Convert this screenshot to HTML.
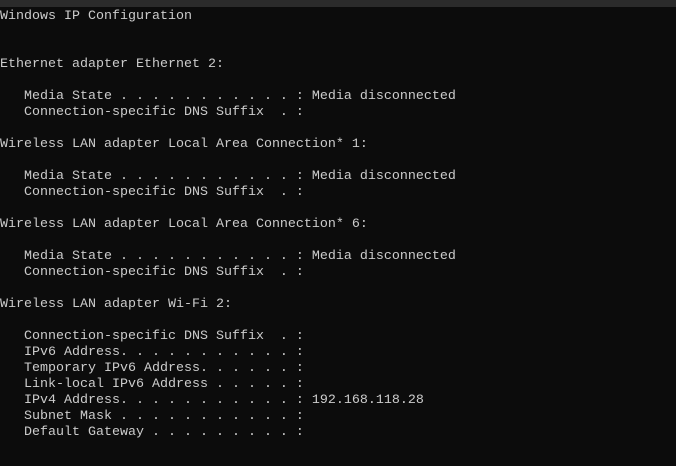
<!DOCTYPE html><html><head><style>
html,body{margin:0;padding:0;background:#0c0c0c;width:676px;height:466px;overflow:hidden}
.bar{height:7px;background:#2b2b2b}
pre{margin:0;padding-top:2px;color:#cccccc;font-family:"Liberation Mono",monospace;font-size:13.33px;line-height:16px;letter-spacing:0}
</style></head><body><div class="bar"></div><pre>Windows IP Configuration


Ethernet adapter Ethernet 2:

   Media State . . . . . . . . . . . : Media disconnected
   Connection-specific DNS Suffix  . :

Wireless LAN adapter Local Area Connection* 1:

   Media State . . . . . . . . . . . : Media disconnected
   Connection-specific DNS Suffix  . :

Wireless LAN adapter Local Area Connection* 6:

   Media State . . . . . . . . . . . : Media disconnected
   Connection-specific DNS Suffix  . :

Wireless LAN adapter Wi-Fi 2:

   Connection-specific DNS Suffix  . :
   IPv6 Address. . . . . . . . . . . :
   Temporary IPv6 Address. . . . . . :
   Link-local IPv6 Address . . . . . :
   IPv4 Address. . . . . . . . . . . : 192.168.118.28
   Subnet Mask . . . . . . . . . . . :
   Default Gateway . . . . . . . . . :</pre></body></html>
